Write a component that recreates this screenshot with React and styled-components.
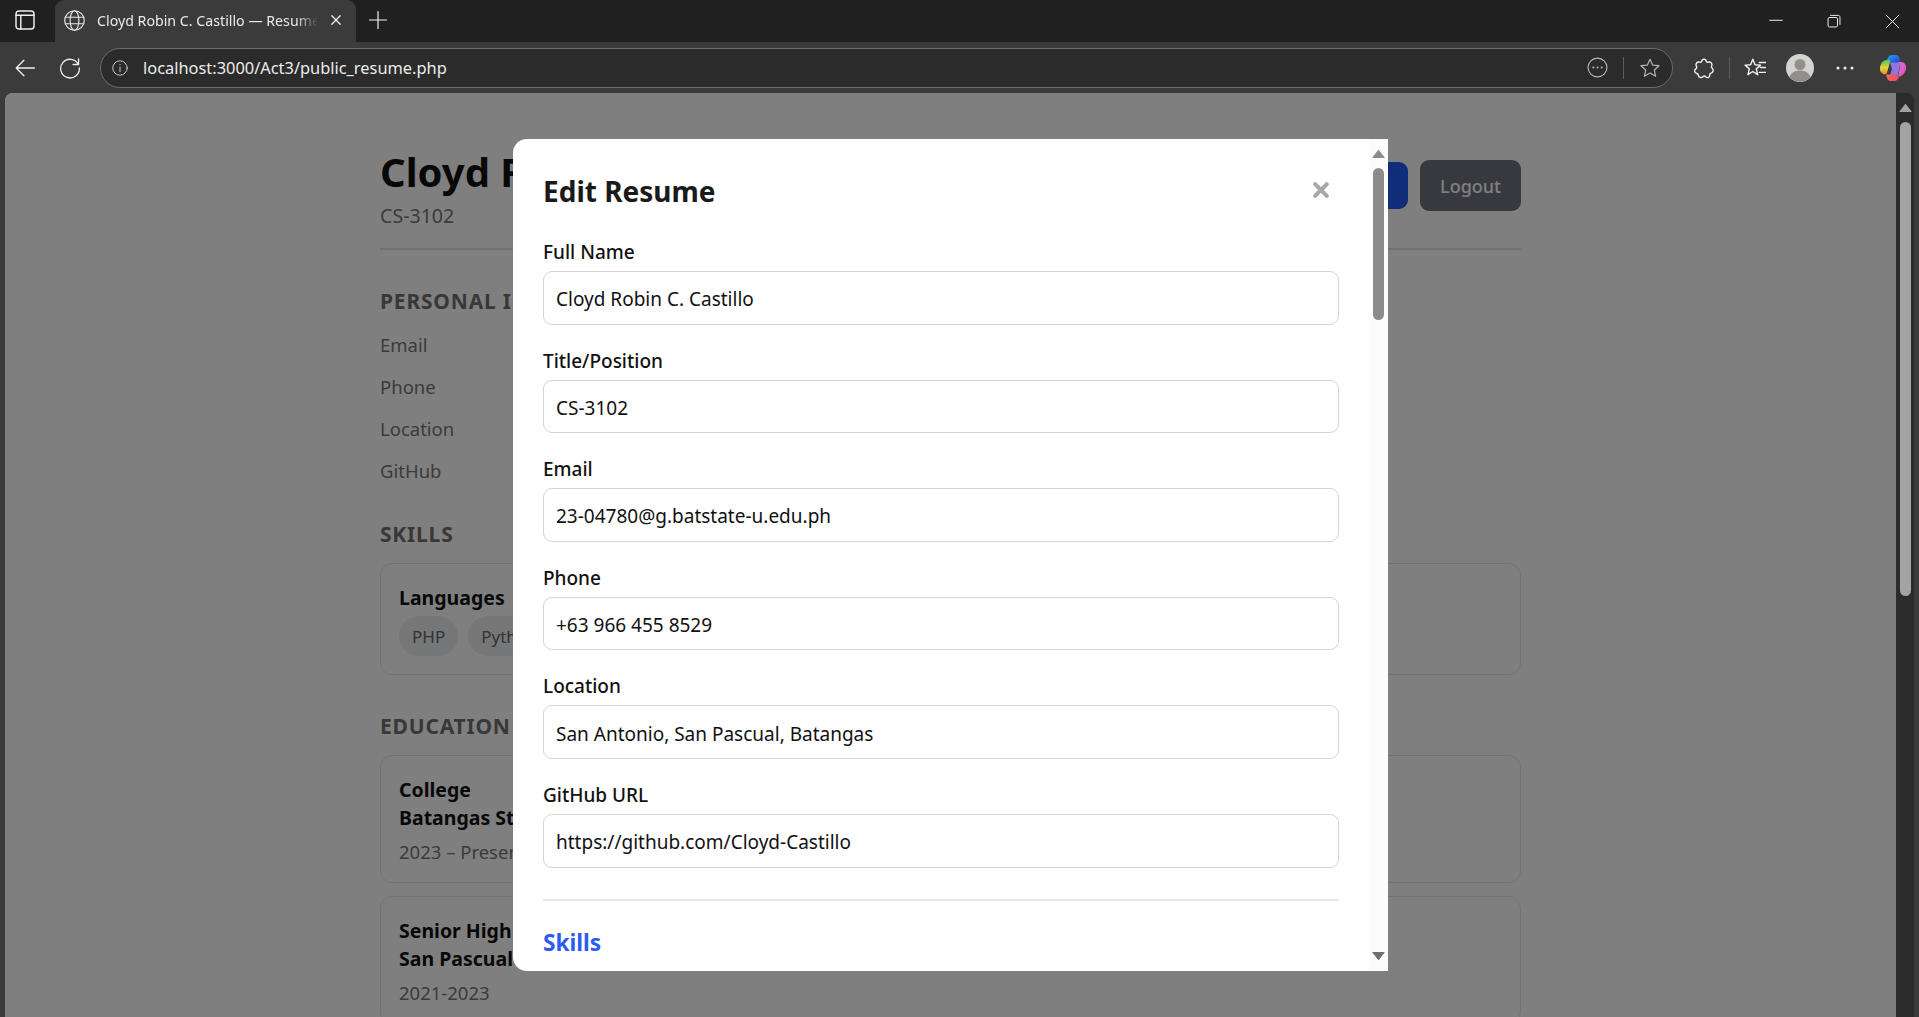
import React from 'react';
import styled, { createGlobalStyle } from 'styled-components';

const Global = createGlobalStyle`
  html, body {
    margin: 0;
    padding: 0;
    height: 100%;
    overflow: hidden;
    background: #3b3b3b;
  }
  * { box-sizing: border-box; }
`;

const Window = styled.div`
  width: 1919px;
  height: 1017px;
  display: flex;
  flex-direction: column;
  font-family: 'Noto Sans', 'Open Sans', sans-serif;
  background: #3b3b3b;
  overflow: hidden;
`;

/* browser chrome */
const TabStrip = styled.div`
  height: 42px;
  flex: none;
  display: flex;
  align-items: stretch;
  background: #202020;
  color: #fff;
`;

const SidebarButton = styled.div`
  width: 55px;
  display: flex;
  align-items: center;
  justify-content: center;
  padding: 0 5px 2px 0;
`;

const Tab = styled.div`
  width: 301px;
  background: #3b3b3b;
  border-radius: 9px 9px 0 0;
  display: flex;
  align-items: center;
  padding: 0 13px 2px 8px;
  gap: 11px;
`;

const TabTitle = styled.div`
  flex: 1;
  font-size: 14.2px;
  color: #eaeaea;
  white-space: nowrap;
  overflow: hidden;
  mask-image: linear-gradient(to right, #000 90%, transparent 100%);
`;

const NewTab = styled.div`
  width: 43px;
  display: flex;
  align-items: center;
  justify-content: center;
  padding-bottom: 2px;
`;

const Spacer = styled.div`
  flex: 1;
`;

const WindowControls = styled.div`
  display: flex;
  margin-right: -2px;
`;

const WindowButton = styled.div`
  width: 58px;
  display: flex;
  align-items: center;
  justify-content: center;
`;

const Toolbar = styled.div`
  height: 51px;
  flex: none;
  display: flex;
  align-items: center;
  padding: 0 0 0 5px;
  background: #3b3b3b;
`;

const NavButton = styled.div`
  width: ${({ $w }) => $w || 40}px;
  flex: none;
  display: flex;
  align-items: center;
  justify-content: center;
`;

const AddressBar = styled.div`
  width: 1573px;
  height: 40px;
  margin: 0 18px 0 5px;
  flex: none;
  border: 1px solid #6b6b6b;
  border-radius: 20px;
  background: #2b2b2b;
  display: flex;
  align-items: center;
  padding: 0 11px 0 10px;
`;

const Url = styled.div`
  flex: 1;
  margin-left: 14px;
  font-size: 16.4px;
  color: #ececec;
`;

const BarDivider = styled.div`
  width: 1px;
  height: 22px;
  flex: none;
  background: #5c5c5c;
  margin: 0 ${({ $m }) => $m || 12}px;
`;

const Viewport = styled.div`
  flex: 1;
  display: flex;
  padding: 0 5px 2px 5px;
`;

const PageFrame = styled.div`
  flex: 1;
  display: flex;
  border-radius: 8px;
  overflow: hidden;
  background: #2b2b2b;
`;

const Page = styled.div`
  position: relative;
  flex: 1;
  overflow: hidden;
  background: #fff;
`;

const Resume = styled.div`
  width: 1141px;
  margin: 0 auto;
  padding-top: 53px;
  color: #111;
`;

const Header = styled.div`
  display: flex;
  justify-content: space-between;
  align-items: flex-start;
  padding-bottom: 18px;
  border-bottom: 2px solid #e5e5e5;
`;

const Name = styled.h1`
  margin: 0;
  font-size: 40px;
  line-height: 52px;
  font-weight: 700;
  color: #111;
`;

const Subtitle = styled.div`
  margin-top: 4px;
  font-size: 19.6px;
  line-height: 28px;
  color: #777;
`;

const HeaderActions = styled.div`
  display: flex;
  align-items: center;
  gap: 12px;
  padding-top: 14px;
`;

const Button = styled.div`
  height: ${({ $h }) => $h}px;
  padding: 0 20px;
  border-radius: 9px;
  display: flex;
  align-items: center;
  font-size: 18px;
  font-weight: 500;
  color: #fff;
  background: ${({ $bg }) => $bg};
`;

const Section = styled.h2`
  margin: ${({ $mt }) => $mt}px 0 ${({ $mb }) => $mb || 14}px;
  font-size: 21px;
  line-height: 30px;
  font-weight: 700;
  letter-spacing: 0.8px;
  color: #707070;
`;

const InfoRow = styled.div`
  font-size: 18.5px;
  line-height: 26px;
  height: 42px;
  color: #777;
`;

const Card = styled.div`
  border: 1px solid #e5e5e5;
  border-radius: 12px;
  padding: 20px 18px ${({ $pb }) => $pb || 18}px;
  margin-bottom: 13px;
`;

const CardTitle = styled.div`
  font-size: 19.5px;
  line-height: 28px;
  font-weight: 700;
  color: #111;
`;

const CardMeta = styled.div`
  margin-top: 6px;
  font-size: 18.5px;
  line-height: 28px;
  color: #777;
`;

const Chips = styled.div`
  display: flex;
  gap: 10px;
  margin-top: 4px;
`;

const Chip = styled.div`
  height: 40px;
  padding: 0 13px;
  border-radius: 20px;
  background: #eceff3;
  display: flex;
  align-items: center;
  font-size: 17px;
  color: #666;
`;

/* modal */
const Overlay = styled.div`
  position: absolute;
  inset: 0;
  background: rgba(0, 0, 0, 0.5);
  display: flex;
  justify-content: center;
  align-items: flex-start;
  padding: 46px 0 0 0;
`;

const Modal = styled.div`
  width: 875px;
  height: 832px;
  background: #fff;
  border-radius: 14px 0 0 14px;
  overflow: hidden;
  display: flex;
`;

const ModalBody = styled.div`
  flex: 1;
  overflow: hidden;
  padding: 33px 30px 0;
  color: #111;
`;

const ModalHead = styled.div`
  display: flex;
  justify-content: space-between;
  align-items: center;
  height: 38px;
  margin-bottom: 30px;
`;

const ModalTitle = styled.h2`
  margin: 0;
  font-size: 28px;
  font-weight: 700;
  color: #1a1a1a;
`;

const Close = styled.div`
  margin: 0 9px 2px 0;
  display: flex;
`;

const Field = styled.div`
  margin-bottom: 24px;
`;

const Label = styled.label`
  display: block;
  height: 24px;
  line-height: 24px;
  margin-bottom: 7px;
  font-size: 19px;
  font-weight: 500;
  color: #111;
`;

const Input = styled.input`
  display: block;
  width: 100%;
  height: 53.6px;
  padding: 3px 12px 0;
  border: 1px solid #d1d5db;
  border-radius: 9px;
  font-family: inherit;
  font-size: 19px;
  color: #111;
  background: #fff;
  outline: none;
`;

const ModalRule = styled.div`
  height: 2px;
  margin: 31px 0 27px;
  background: #e5e7eb;
`;

const SkillsHeading = styled.h3`
  margin: 0;
  font-size: 22.7px;
  line-height: 30px;
  font-weight: 700;
  color: #2a5cf0;
`;

const ModalScroll = styled.div`
  width: 19px;
  flex: none;
  background: #fcfcfc;
  display: flex;
  flex-direction: column;
  align-items: center;
  padding: 10px 0 10px;
`;

const ModalThumb = styled.div`
  width: 11px;
  height: 152px;
  margin-top: 9px;
  border-radius: 6px;
  background: #8b8b8b;
`;

const PageScroll = styled.div`
  width: 18px;
  flex: none;
  background: #2b2b2b;
  display: flex;
  flex-direction: column;
  align-items: center;
  padding: 10px 0 8px;
`;

const PageThumb = styled.div`
  width: 11px;
  height: ${({ $h }) => $h}px;
  margin-top: 9px;
  border-radius: 6px;
  background: #a3a3a3;
`;

const Arrow = ({ up, color }) => (
  <svg width="13" height="10" viewBox="0 0 13 10">
    <path
      d={up ? 'M6.5 1.5 L12 8.5 H1 Z' : 'M1 1.5 H12 L6.5 8.5 Z'}
      fill={color}
      stroke={color}
      strokeWidth="1.2"
      strokeLinejoin="round"
    />
  </svg>
);

const Stroke = ({ size = 20, children, color = '#e6e6e6', w = 1.3 }) => (
  <svg width={size} height={size} viewBox="0 0 20 20" fill="none" stroke={color} strokeWidth={w} strokeLinecap="round" strokeLinejoin="round">
    {children}
  </svg>
);

const CopilotLogo = () => (
  <svg width="28" height="28" viewBox="0 0 28 28">
    <defs>
      <linearGradient id="cpA" x1="0" y1="0" x2="1" y2="1">
        <stop offset="0" stopColor="#1fb4f0" />
        <stop offset="0.6" stopColor="#2a5fe0" />
        <stop offset="1" stopColor="#1f3fb0" />
      </linearGradient>
      <linearGradient id="cpB" x1="0" y1="0" x2="0" y2="1">
        <stop offset="0" stopColor="#3cc46a" />
        <stop offset="0.55" stopColor="#e8d23a" />
        <stop offset="1" stopColor="#f08a2c" />
      </linearGradient>
      <linearGradient id="cpC" x1="0" y1="0" x2="1" y2="1">
        <stop offset="0" stopColor="#c86fe8" />
        <stop offset="0.7" stopColor="#e45ab4" />
        <stop offset="1" stopColor="#f0709a" />
      </linearGradient>
      <linearGradient id="cpD" x1="0" y1="0" x2="1" y2="0">
        <stop offset="0" stopColor="#f0683a" />
        <stop offset="1" stopColor="#f04a7a" />
      </linearGradient>
    </defs>
    <path d="M9 3.5 C10.2 1.8 11.5 1 13.5 1 H17 C19 1 20 2.2 20.5 4 L22 9 H12 L7 9 Z" fill="url(#cpA)" />
    <path d="M7.5 6 C8.5 5 11 5 11.3 7 L8.5 17 C8 19.5 7 21 4.5 20 C1.8 19 0.5 16.5 1 13.5 C1.4 10.5 3 6.5 7.5 6 Z" fill="url(#cpB)" />
    <path d="M19 8 H22.5 C25.5 8 27.5 11 27 14.5 C26.5 18 24.5 21 21.5 22.5 C20 23 19 21.5 19.5 19.5 L20.5 15 C21 12.5 20.5 10 19 8 Z" fill="url(#cpC)" />
    <path d="M11 8.5 H20 C21 11 20.5 13.5 20 16 L18.5 21 C18 22.5 17 24 15 24 L11 21 L13 15 Z" fill="#9a7cf0" opacity="0.9" />
    <path d="M7 20.5 H19 L20 23 C19 25.5 17.5 27 15 27 H11.5 C9.5 27 8 25.5 7 20.5 Z" fill="url(#cpD)" />
  </svg>
);

const FIELDS = [
  ['Full Name', 'Cloyd Robin C. Castillo'],
  ['Title/Position', 'CS-3102'],
  ['Email', '23-04780@g.batstate-u.edu.ph'],
  ['Phone', '+63 966 455 8529'],
  ['Location', 'San Antonio, San Pascual, Batangas'],
  ['GitHub URL', 'https://github.com/Cloyd-Castillo'],
];

const App = () => (
  <Window>
    <Global />
    <TabStrip>
      <SidebarButton>
        <Stroke size={24} color="#f0f0f0" w={1.2}>
          <rect x="2.5" y="2.5" width="15" height="15" rx="2.5" />
          <path d="M2.5 6 H17.5 M6.5 6 V17.5" />
        </Stroke>
      </SidebarButton>
      <Tab>
        <Stroke size={23} color="#e6e6e6" w={1}>
          <circle cx="10" cy="10" r="8.5" />
          <ellipse cx="10" cy="10" rx="3.8" ry="8.5" />
          <path d="M2 7.2 H18 M2 12.8 H18" />
        </Stroke>
        <TabTitle>Cloyd Robin C. Castillo — Resume</TabTitle>
        <Stroke size={14} color="#f0f0f0" w={1.9}>
          <path d="M4 4 L16 16 M16 4 L4 16" />
        </Stroke>
      </Tab>
      <NewTab>
        <Stroke size={20} color="#f0f0f0" w={1.2}>
          <path d="M10 1.5 V18.5 M1.5 10 H18.5" />
        </Stroke>
      </NewTab>
      <Spacer />
      <WindowControls>
        <WindowButton>
          <Stroke size={14} color="#f0f0f0" w={1.4}>
            <path d="M1 9 H19" />
          </Stroke>
        </WindowButton>
        <WindowButton>
          <Stroke size={14} color="#f0f0f0" w={1.4}>
            <rect x="1.5" y="5" width="13.5" height="13.5" rx="2" />
            <path d="M5 2 H16 C17.5 2 18.5 3 18.5 4.5 V15" />
          </Stroke>
        </WindowButton>
        <WindowButton>
          <Stroke size={15} color="#f0f0f0" w={1.3}>
            <path d="M1.5 1.5 L18.5 18.5 M18.5 1.5 L1.5 18.5" />
          </Stroke>
        </WindowButton>
      </WindowControls>
    </TabStrip>

    <Toolbar>
      <NavButton>
        <Stroke size={22} color="#f0f0f0" w={1.2}>
          <path d="M18.5 10 H2 M9 3 L2 10 L9 17" />
        </Stroke>
      </NavButton>
      <NavButton $w={50}>
        <Stroke size={22} color="#f0f0f0" w={1.2}>
          <path d="M17.5 6.5 A8.5 8.5 0 1 0 18.5 10 M17.8 1.8 V6.8 H12.8" />
        </Stroke>
      </NavButton>
      <AddressBar>
        <Stroke size={18} color="#c8c8c8" w={1.1}>
          <circle cx="10" cy="10" r="8" />
          <path d="M10 9 V14.2 M10 6 V6.4" />
        </Stroke>
        <Url>localhost:3000/Act3/public_resume.php</Url>
        <Stroke size={21} color="#b5b5b5" w={1.1}>
          <circle cx="10" cy="10" r="9" />
          <path d="M6 10 H6.1 M10 10 H10.1 M14 10 H14.1" strokeWidth="1.8" />
        </Stroke>
        <BarDivider $m={15} />
        <Stroke size={22} color="#b5b5b5" w={1.1}>
          <path d="M10 2 L12.4 7.3 L18.2 7.9 L13.9 11.8 L15.1 17.5 L10 14.6 L4.9 17.5 L6.1 11.8 L1.8 7.9 L7.6 7.3 Z" />
        </Stroke>
      </AddressBar>
      <NavButton $w={26}>
        <Stroke size={22} color="#f0f0f0" w={1.3}>
          <path d="M8 3.5 C8.5 1.5 11.5 1.5 12 3.5 C12.2 4.5 13 5 14 4.7 C16 4 18 6 17 8 C16.5 9 16.5 9.5 17.5 10.2 C19 11.5 18.5 14 16.5 14.7 C15.5 15 15 15.7 15.2 16.5 C15.5 18.5 13 19.5 11.5 18 C10.7 17.2 9.8 17.2 9 18 C7.5 19.3 5 18.5 4.8 16.5 C4.7 15.5 4 15 3 14.8 C1 14.2 1 11.5 2.8 10.5 C3.5 10 3.5 9 3 8.3 C2 6.3 3.8 4 6 4.7 C7 5 7.8 4.5 8 3.5 Z" />
        </Stroke>
      </NavButton>
      <BarDivider $m={12} />
      <NavButton $w={26}>
        <Stroke size={22} color="#f0f0f0" w={1.3}>
          <path d="M8 2 L10 7 L15 7.4 L11.2 10.8 L12.4 16 L8 13.2 L3.6 16 L4.8 10.8 L1 7.4 L6 7 Z M14 5 H20 M15 9.5 H20 M14 14 H20" />
        </Stroke>
      </NavButton>
      <NavButton $w={64}>
        <svg width="28" height="28" viewBox="0 0 28 28">
          <circle cx="14" cy="14" r="14" fill="#d4d3cf" />
          <circle cx="14" cy="10.5" r="5.5" fill="#908f8b" />
          <path d="M3.5 23 C5 18.5 9 16.5 14 16.5 C19 16.5 23 18.5 24.5 23 A14 14 0 0 1 3.5 23 Z" fill="#908f8b" />
        </svg>
      </NavButton>
      <NavButton $w={26}>
        <svg width="18" height="4" viewBox="0 0 18 4">
          <circle cx="2" cy="2" r="1.5" fill="#f0f0f0" />
          <circle cx="9" cy="2" r="1.5" fill="#f0f0f0" />
          <circle cx="16" cy="2" r="1.5" fill="#f0f0f0" />
        </svg>
      </NavButton>
      <NavButton $w={70}>
        <CopilotLogo />
      </NavButton>
    </Toolbar>

    <Viewport>
      <PageFrame>
        <Page>
          <Resume>
            <Header>
              <div>
                <Name>Cloyd Robin C. Castillo</Name>
                <Subtitle>CS-3102</Subtitle>
              </div>
              <HeaderActions>
                <Button $bg="#1e5af0" $h={47}>Edit Resume</Button>
                <Button $bg="#6e737f" $h={51}>Logout</Button>
              </HeaderActions>
            </Header>
            <Section $mt={36} $mb={16}>PERSONAL INFORMATION</Section>
            <InfoRow>Email</InfoRow>
            <InfoRow>Phone</InfoRow>
            <InfoRow>Location</InfoRow>
            <InfoRow>GitHub</InfoRow>
            <Section $mt={19}>SKILLS</Section>
            <Card>
              <CardTitle>Languages</CardTitle>
              <Chips>
                <Chip>PHP</Chip>
                <Chip>Python</Chip>
              </Chips>
            </Card>
            <Section $mt={36}>EDUCATION</Section>
            <Card $pb={16}>
              <CardTitle>College</CardTitle>
              <CardTitle>Batangas State University</CardTitle>
              <CardMeta>2023 – Present</CardMeta>
            </Card>
            <Card $pb={16}>
              <CardTitle>Senior High School</CardTitle>
              <CardTitle>San Pascual Senior High School</CardTitle>
              <CardMeta>2021-2023</CardMeta>
            </Card>
          </Resume>
          <Overlay>
            <Modal>
              <ModalBody>
                <ModalHead>
                  <ModalTitle>Edit Resume</ModalTitle>
                  <Close>
                    <Stroke size={18} color="#a8a8a8" w={4.6}>
                      <path d="M3.5 3.5 L16.5 16.5 M16.5 3.5 L3.5 16.5" />
                    </Stroke>
                  </Close>
                </ModalHead>
                {FIELDS.map(([label, value]) => (
                  <Field key={label}>
                    <Label>{label}</Label>
                    <Input defaultValue={value} readOnly />
                  </Field>
                ))}
                <ModalRule />
                <SkillsHeading>Skills</SkillsHeading>
              </ModalBody>
              <ModalScroll>
                <Arrow up color="#8b8b8b" />
                <ModalThumb />
                <Spacer />
                <Arrow color="#6f6f6f" />
              </ModalScroll>
            </Modal>
          </Overlay>
        </Page>
        <PageScroll>
          <Arrow up color="#a3a3a3" />
          <PageThumb $h={474} />
          <Spacer />
          <Arrow color="#a3a3a3" />
        </PageScroll>
      </PageFrame>
    </Viewport>
  </Window>
);

export default App;
